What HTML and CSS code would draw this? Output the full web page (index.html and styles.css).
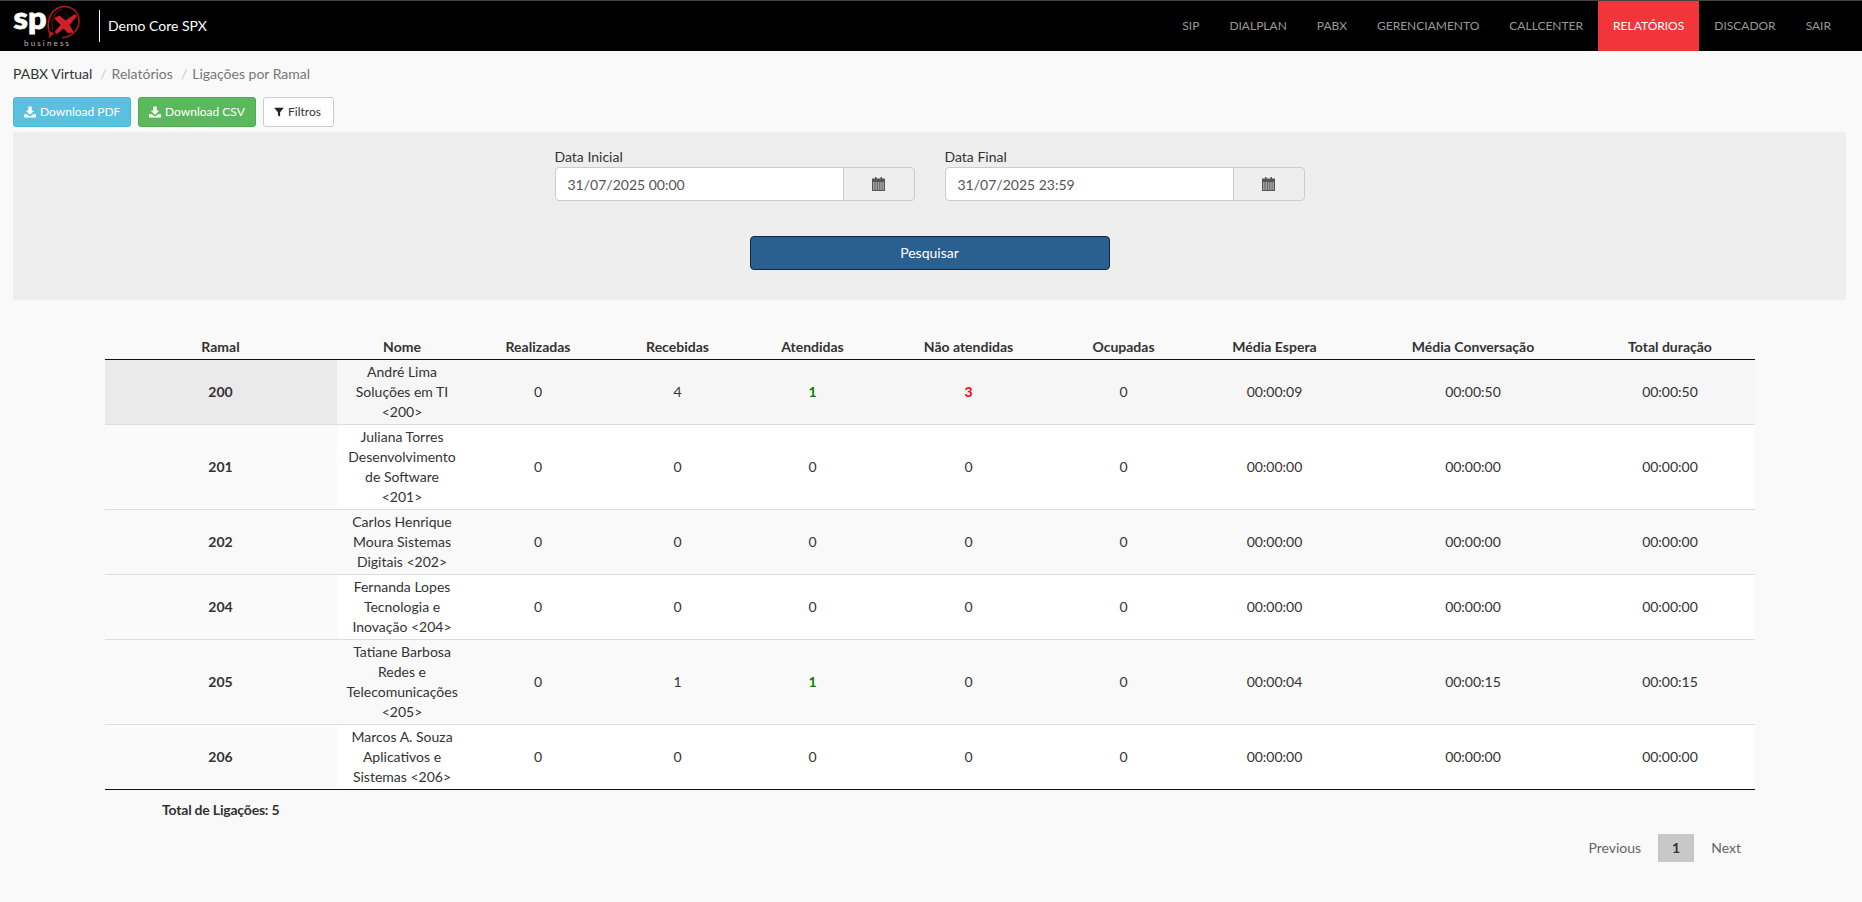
FILE: index.html
```html
<!DOCTYPE html>
<html lang="pt-BR">
<head>
<meta charset="utf-8">
<title>Ligações por Ramal</title>
<link rel="stylesheet" href="styles.css">
</head>
<body>
<header class="navbar">
  <div class="brand">
    <svg class="logo" viewBox="0 -3 70 50" width="70" height="50" aria-label="spx business">
      <text class="logo-sp" x="0.5" y="25" textLength="33" lengthAdjust="spacingAndGlyphs">sp</text>
      <path class="logo-ring" d="M37 30C33 21 36 9 44 4.5C54 -0.5 65 5 66 15.5C66.8 25 59 33.5 49 33.8"/>
      <path class="logo-ring-thin" d="M40 26C37 17 41 8 49 5"/>
      <path class="logo-tail" d="M35.5 34.5L37 27L41.5 29.5Z"/>
      <path class="logo-x" d="M41 14L46.5 11.5L52.5 16.5L62 10L64 12L56.5 21L61 28.5L55 29L50.5 24.5L44 30L41.5 28L47.5 21Z"/>
      <text class="logo-biz" x="11" y="42" textLength="45">business</text>
    </svg>
    <span class="brand-divider"></span>
    <span class="brand-name">Demo Core SPX</span>
  </div>
  <nav class="menu">
    <a class="menu-item">SIP</a>
    <a class="menu-item">DIALPLAN</a>
    <a class="menu-item">PABX</a>
    <a class="menu-item">GERENCIAMENTO</a>
    <a class="menu-item">CALLCENTER</a>
    <a class="menu-item active">RELATÓRIOS</a>
    <a class="menu-item">DISCADOR</a>
    <a class="menu-item">SAIR</a>
  </nav>
</header>

<main class="page">
  <ol class="breadcrumb">
    <li class="crumb first">PABX Virtual</li>
    <li class="crumb">Relatórios</li>
    <li class="crumb">Ligações por Ramal</li>
  </ol>

  <div class="toolbar">
    <button class="btn btn-info">
      <svg class="icon" viewBox="0 0 14 14"><path d="M5 0.5H9V5.5H12L7 10.2L2 5.5H5Z"/><path d="M0 9.5H3.6L5.8 11.6C6.5 12.2 7.5 12.2 8.2 11.6L10.4 9.5H14V13.5H0Z"/></svg>
      Download PDF
    </button>
    <button class="btn btn-success">
      <svg class="icon" viewBox="0 0 14 14"><path d="M5 0.5H9V5.5H12L7 10.2L2 5.5H5Z"/><path d="M0 9.5H3.6L5.8 11.6C6.5 12.2 7.5 12.2 8.2 11.6L10.4 9.5H14V13.5H0Z"/></svg>
      Download CSV
    </button>
    <button class="btn btn-default">
      <svg class="icon icon-filter" viewBox="0 0 12 12"><path d="M0.2 0.8H11.8L7.3 6.2V11.8L4.7 9.9V6.2Z"/></svg>
      Filtros
    </button>
  </div>

  <section class="filters">
    <div class="filter-row">
      <div class="field">
        <label class="field-label">Data Inicial</label>
        <div class="input-group">
          <input class="input" value="31/07/2025 00:00">
          <span class="addon"><svg class="cal" viewBox="0 0 13 14"><path fill-rule="evenodd" d="M3 0H4.5V1.5H8.5V0H10V1.5H13V14H0V1.5H3ZM1 5.6V6.6H2.6V5.6ZM3.4 5.6V6.6H5V5.6ZM5.8 5.6V6.6H7.4V5.6ZM8.2 5.6V6.6H9.8V5.6ZM10.4 5.6V6.6H12V5.6ZM1 7.6V8.6H2.6V7.6ZM3.4 7.6V8.6H5V7.6ZM5.8 7.6V8.6H7.4V7.6ZM8.2 7.6V8.6H9.8V7.6ZM10.4 7.6V8.6H12V7.6ZM1 9.6V10.6H2.6V9.6ZM3.4 9.6V10.6H5V9.6ZM5.8 9.6V10.6H7.4V9.6ZM8.2 9.6V10.6H9.8V9.6ZM10.4 9.6V10.6H12V9.6ZM1 11.6V12.6H2.6V11.6ZM3.4 11.6V12.6H5V11.6ZM5.8 11.6V12.6H7.4V11.6ZM8.2 11.6V12.6H9.8V11.6ZM10.4 11.6V12.6H12V11.6Z"/></svg></span>
        </div>
      </div>
      <div class="field">
        <label class="field-label">Data Final</label>
        <div class="input-group">
          <input class="input" value="31/07/2025 23:59">
          <span class="addon"><svg class="cal" viewBox="0 0 13 14"><path fill-rule="evenodd" d="M3 0H4.5V1.5H8.5V0H10V1.5H13V14H0V1.5H3ZM1 5.6V6.6H2.6V5.6ZM3.4 5.6V6.6H5V5.6ZM5.8 5.6V6.6H7.4V5.6ZM8.2 5.6V6.6H9.8V5.6ZM10.4 5.6V6.6H12V5.6ZM1 7.6V8.6H2.6V7.6ZM3.4 7.6V8.6H5V7.6ZM5.8 7.6V8.6H7.4V7.6ZM8.2 7.6V8.6H9.8V7.6ZM10.4 7.6V8.6H12V7.6ZM1 9.6V10.6H2.6V9.6ZM3.4 9.6V10.6H5V9.6ZM5.8 9.6V10.6H7.4V9.6ZM8.2 9.6V10.6H9.8V9.6ZM10.4 9.6V10.6H12V9.6ZM1 11.6V12.6H2.6V11.6ZM3.4 11.6V12.6H5V11.6ZM5.8 11.6V12.6H7.4V11.6ZM8.2 11.6V12.6H9.8V11.6ZM10.4 11.6V12.6H12V11.6Z"/></svg></span>
        </div>
      </div>
    </div>
    <button class="btn-search">Pesquisar</button>
  </section>

  <section class="report">
    <table class="grid">
      <colgroup>
        <col class="c-ramal"><col class="c-nome"><col class="c-real"><col class="c-rec"><col class="c-at"><col class="c-nao"><col class="c-oc"><col class="c-esp"><col class="c-conv"><col class="c-tot">
      </colgroup>
      <thead>
        <tr><th>Ramal</th><th>Nome</th><th>Realizadas</th><th>Recebidas</th><th>Atendidas</th><th>Não atendidas</th><th>Ocupadas</th><th>Média Espera</th><th>Média Conversação</th><th>Total duração</th></tr>
      </thead>
      <tbody>
        <tr class="row-hover"><td class="ramal">200</td><td>André Lima Soluções em TI &lt;200&gt;</td><td>0</td><td>4</td><td class="ok">1</td><td class="bad">3</td><td>0</td><td>00:00:09</td><td>00:00:50</td><td>00:00:50</td></tr>
        <tr class="row-even"><td class="ramal">201</td><td>Juliana Torres Desenvolvimento de Software &lt;201&gt;</td><td>0</td><td>0</td><td>0</td><td>0</td><td>0</td><td>00:00:00</td><td>00:00:00</td><td>00:00:00</td></tr>
        <tr class="row-odd"><td class="ramal">202</td><td>Carlos Henrique Moura Sistemas Digitais &lt;202&gt;</td><td>0</td><td>0</td><td>0</td><td>0</td><td>0</td><td>00:00:00</td><td>00:00:00</td><td>00:00:00</td></tr>
        <tr class="row-even"><td class="ramal">204</td><td>Fernanda Lopes Tecnologia e Inovação &lt;204&gt;</td><td>0</td><td>0</td><td>0</td><td>0</td><td>0</td><td>00:00:00</td><td>00:00:00</td><td>00:00:00</td></tr>
        <tr class="row-odd"><td class="ramal">205</td><td>Tatiane Barbosa Redes e Telecomunicações &lt;205&gt;</td><td>0</td><td>1</td><td class="ok">1</td><td>0</td><td>0</td><td>00:00:04</td><td>00:00:15</td><td>00:00:15</td></tr>
        <tr class="row-even"><td class="ramal">206</td><td>Marcos A. Souza Aplicativos e Sistemas &lt;206&gt;</td><td>0</td><td>0</td><td>0</td><td>0</td><td>0</td><td>00:00:00</td><td>00:00:00</td><td>00:00:00</td></tr>
      </tbody>
    </table>
    <p class="total">Total de Ligações: 5</p>
    <div class="pager">
      <a class="page-link">Previous</a>
      <a class="page-link current">1</a>
      <a class="page-link">Next</a>
    </div>
  </section>
</main>
</body>
</html>
```

FILE: styles.css
```css
* { box-sizing: border-box; }
html, body { margin: 0; height: 100%; }
body {
  background: #f9f9f9;
  color: #333;
  font-family: Lato, "Liberation Sans", sans-serif;
  font-size: 14px;
  line-height: 20px;
  min-height: 902px;
}

/* navbar */
.navbar {
  height: 51px;
  background: #000;
  border-top: 1px solid #444;
  display: flex;
  justify-content: space-between;
  align-items: stretch;
  padding-right: 16px;
}
.brand { display: flex; align-items: center; padding-left: 13px; }
.logo { display: block; flex: none; width: 70px; height: 50px; margin-right: 16px; overflow: visible; }
.logo-sp { font-family: Lato, sans-serif; font-weight: 900; font-size: 31px; fill: #fff; stroke: #fff; stroke-width: 0.9; }
.logo-ring { fill: none; stroke: #b3161d; stroke-width: 1.5; }
.logo-ring-thin { fill: none; stroke: #7d1015; stroke-width: 1; }
.logo-tail { fill: #b3161d; }
.logo-x { fill: #cf1f28; }
.logo-biz { font-family: Lato, sans-serif; font-size: 8px; fill: #bbb; }
.brand-divider { width: 1px; height: 32px; background: #fff; margin-right: 8px; }
.brand-name { color: #fff; font-size: 14px; }
.menu { display: flex; }
.menu-item {
  display: flex;
  align-items: center;
  padding: 0 15px;
  font-size: 12px;
  color: #999;
}
.menu-item.active { background: #f2353b; color: #fff; }

/* page */
.page { padding: 0 16px 0 13px; }
.breadcrumb {
  list-style: none;
  margin: 0;
  padding: 13px 0 0;
  height: 46px;
  display: flex;
}
.crumb { color: #777; }
.crumb.first { color: #333; }
.crumb + .crumb::before { content: "/"; color: #ccc; padding: 0 5px 0 8px; }

.toolbar { display: flex; gap: 7px; }
.btn {
  height: 30px;
  padding: 0 10px;
  border: 1px solid transparent;
  border-radius: 3px;
  font: 12px/18px Lato, sans-serif;
  display: flex;
  align-items: center;
  gap: 4px;
  white-space: nowrap;
}
.icon { width: 12px; height: 12px; fill: currentColor; display: block; flex: none; }
.icon-filter { width: 10px; height: 10px; fill: #222; }
.btn-info { background: #5bc0de; border-color: #46b8da; color: #fff; width: 118px; }
.btn-success { background: #5cb85c; border-color: #4cae4c; color: #fff; width: 118px; }
.btn-default { background: #fff; border-color: #ccc; color: #333; width: 71px; }

.filters {
  margin-top: 5px;
  height: 168px;
  background: #eee;
  padding-top: 15px;
  display: flex;
  flex-direction: column;
  align-items: center;
}
.filter-row { display: flex; gap: 30px; }
.field { width: 360px; }
.field-label { display: block; height: 20px; }
.input-group { display: flex; height: 34px; }
.input {
  flex: 1;
  min-width: 0;
  height: 34px;
  padding: 0 12px;
  border: 1px solid #ccc;
  border-radius: 4px 0 0 4px;
  background: #fff;
  color: #555;
  font: 14px Lato, sans-serif;
  outline: none;
}
.addon {
  width: 72px;
  flex: none;
  background: #eee;
  border: 1px solid #ccc;
  margin-left: -1px;
  border-radius: 0 4px 4px 0;
  display: flex;
  align-items: center;
  justify-content: center;
}
.cal { width: 13px; height: 14px; fill: #555; display: block; }
.btn-search {
  margin-top: 35px;
  width: 360px;
  height: 34px;
  padding: 0 0 2px;
  background: #2a6090;
  border: 1px solid #122b40;
  border-radius: 4px;
  color: #fff;
  font: 14px Lato, sans-serif;
}

/* table */
.report { padding-top: 35px; }
.grid {
  width: 90%;
  margin: 0 auto;
  table-layout: fixed;
  border-collapse: separate;
  border-spacing: 0;
  text-align: center;
  border-bottom: 1px solid #111;
}
.c-ramal { width: 232px; }
.c-nome { width: 131px; }
.c-real { width: 141px; }
.c-rec { width: 138px; }
.c-at { width: 132px; }
.c-nao { width: 180px; }
.c-oc { width: 130px; }
.c-esp { width: 172px; }
.c-conv { width: 225px; }
.c-tot { width: 169px; }
.grid th { padding: 2px 0; font-weight: 700; border-bottom: 1px solid #111; }
.grid td { padding: 2px 10px; border-top: 1px solid #ddd; }
.grid tbody tr:first-child td { border-top: 0; }
.row-hover td { background: #f6f6f6; }
.row-hover td.ramal { background: #eaeaea; }
.row-odd td, .row-odd td.ramal { background: #f9f9f9; }
.row-even td { background: #fff; }
.row-even td.ramal { background: #fafafa; }
.grid td.ramal { font-weight: 700; }
.grid td.ok { color: #0a7d00; font-weight: 700; }
.grid td.bad { color: #f00; font-weight: 700; }

.total { margin: 10px 0 0 149px; font-weight: 700; letter-spacing: -0.2px; }
.pager { margin-top: 14px; display: flex; justify-content: flex-end; padding-right: 91px; gap: 3px; }
.page-link { padding: 4px 14px; color: #666; }
.page-link.current { background: #c8c8c8; color: #333; font-weight: 700; }
```
